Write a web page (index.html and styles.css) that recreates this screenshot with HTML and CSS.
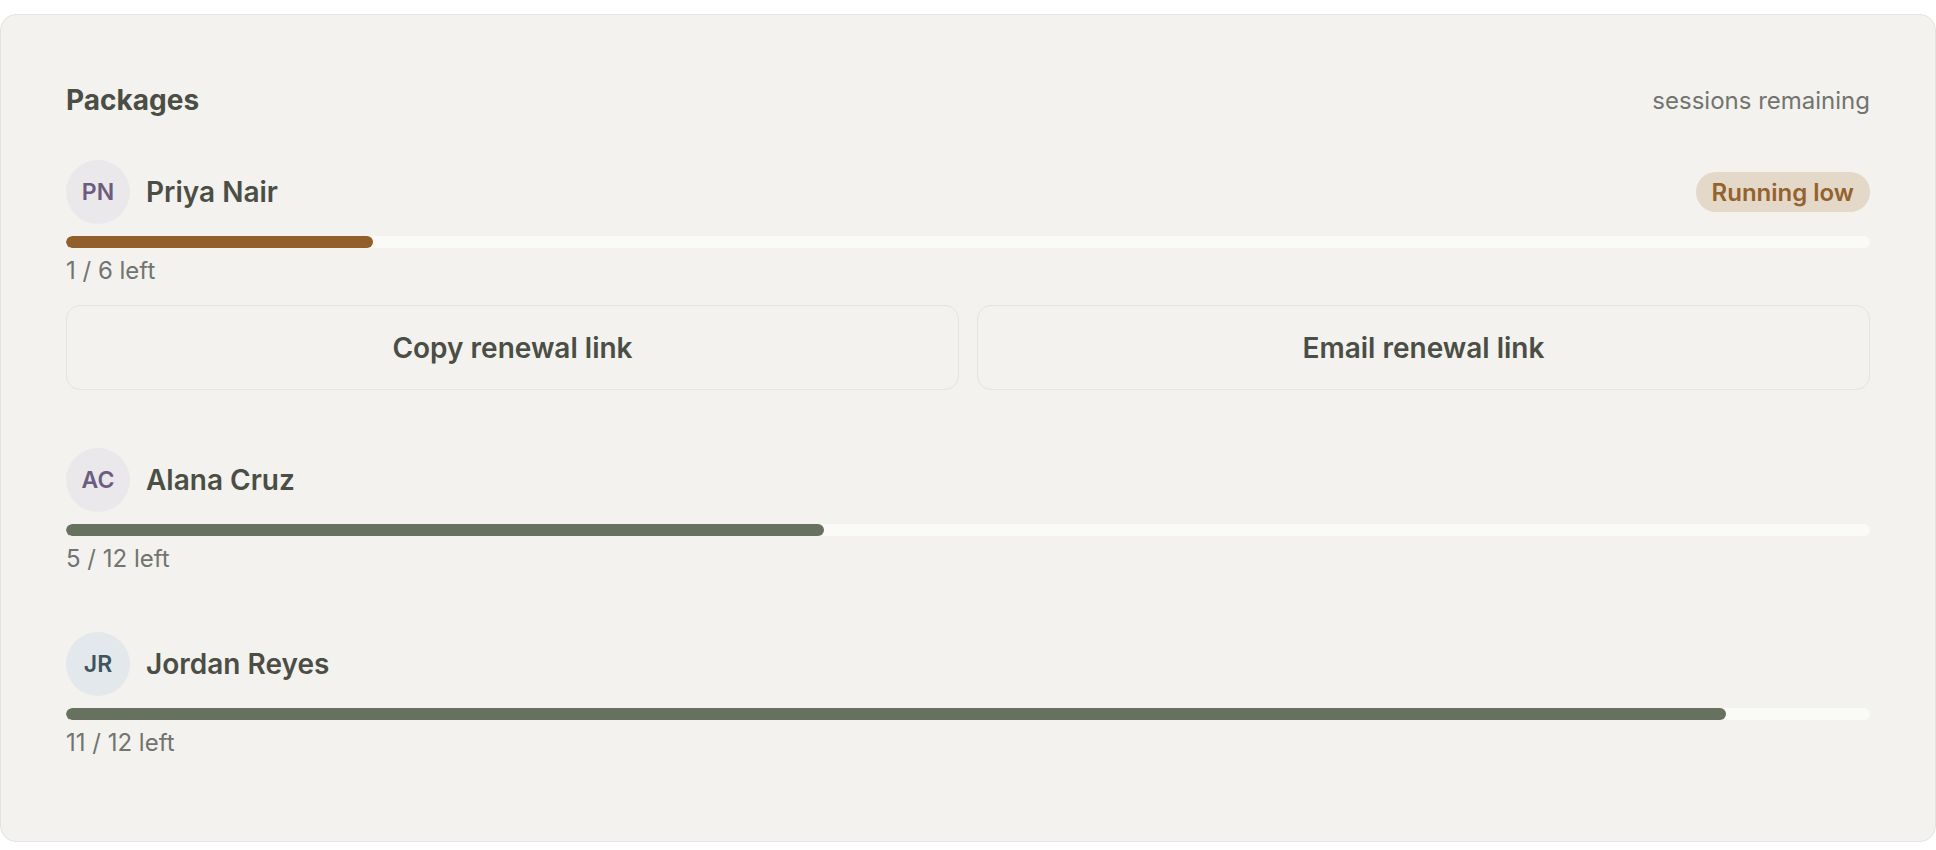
FILE: index.html
```html
<!DOCTYPE html>
<html lang="en">
<head>
<meta charset="utf-8">
<title>Packages</title>
<link rel="stylesheet" href="styles.css">
</head>
<body>
<section class="card">
  <header class="card-head">
    <h2 class="title">Packages</h2>
    <span class="hint">sessions remaining</span>
  </header>

  <div class="pkg">
    <div class="pkg-top">
      <div class="who">
        <span class="avatar avatar-violet">PN</span>
        <span class="name">Priya Nair</span>
      </div>
      <span class="badge">Running low</span>
    </div>
    <div class="track"><div class="fill fill-low" style="width:17%"></div></div>
    <div class="count">1 / 6 left</div>
    <div class="actions">
      <button class="btn" type="button">Copy renewal link</button>
      <button class="btn" type="button">Email renewal link</button>
    </div>
  </div>

  <div class="pkg">
    <div class="pkg-top">
      <div class="who">
        <span class="avatar avatar-violet">AC</span>
        <span class="name">Alana Cruz</span>
      </div>
    </div>
    <div class="track"><div class="fill" style="width:42%"></div></div>
    <div class="count">5 / 12 left</div>
  </div>

  <div class="pkg">
    <div class="pkg-top">
      <div class="who">
        <span class="avatar avatar-blue">JR</span>
        <span class="name">Jordan Reyes</span>
      </div>
    </div>
    <div class="track"><div class="fill" style="width:92%"></div></div>
    <div class="count">11 / 12 left</div>
  </div>
</section>
</body>
</html>
```

FILE: styles.css
```css
* { box-sizing: border-box; }

html, body {
  margin: 0;
  padding: 0;
  background: #ffffff;
}

body {
  font-family: Inter, "Noto Sans", "Liberation Sans", sans-serif;
  color: #4a4e45;
  padding-top: 14px;
}

.card {
  background: #f3f2ee;
  border: 1px solid #e4e3df;
  border-radius: 16px;
  padding: 65px 65px 80px 65px;
  display: flex;
  flex-direction: column;
  gap: 58px;
  min-height: 828px;
}

.card-head {
  display: flex;
  justify-content: space-between;
  align-items: center;
  height: 40px;
  margin-bottom: -18px;
}

.title {
  margin: 0;
  font-size: 28px;
  font-weight: 700;
  color: #4a4e45;
}

.hint {
  font-size: 24px;
  color: #72746e;
}

.pkg {
  display: flex;
  flex-direction: column;
}

.pkg-top {
  display: flex;
  justify-content: space-between;
  align-items: center;
  height: 64px;
}

.who {
  display: flex;
  align-items: center;
  gap: 16px;
}

.avatar {
  width: 64px;
  height: 64px;
  border-radius: 50%;
  display: flex;
  align-items: center;
  justify-content: center;
  font-size: 23px;
  font-weight: 600;
}

.avatar-violet {
  background: #ebe8eb;
  color: #6b5c80;
}

.avatar-blue {
  background: #e3e8ec;
  color: #3e5461;
}

.name {
  font-size: 28px;
  font-weight: 600;
  color: #4a4e45;
}

.badge {
  height: 40px;
  padding: 0 16px;
  border-radius: 20px;
  background: #e4d8c8;
  color: #93622d;
  font-size: 24px;
  font-weight: 600;
  display: flex;
  align-items: center;
}

.track {
  margin-top: 12px;
  height: 12px;
  border-radius: 6px;
  background: #fafaf6;
  overflow: hidden;
}

.fill {
  height: 100%;
  border-radius: 6px;
  background: #667160;
}

.fill-low {
  background: #925f2c;
}

.count {
  margin-top: 8px;
  font-size: 24px;
  line-height: 30px;
  color: #72746e;
}

.actions {
  margin-top: 19px;
  display: grid;
  grid-template-columns: 1fr 1fr;
  gap: 18px;
}

.btn {
  height: 85px;
  border: 1px solid #e5e3df;
  border-radius: 14px;
  background: #f3f2ee;
  font-family: Inter, "Noto Sans", "Liberation Sans", sans-serif;
  font-size: 28px;
  font-weight: 600;
  color: #4a4e45;
  cursor: pointer;
}
```
